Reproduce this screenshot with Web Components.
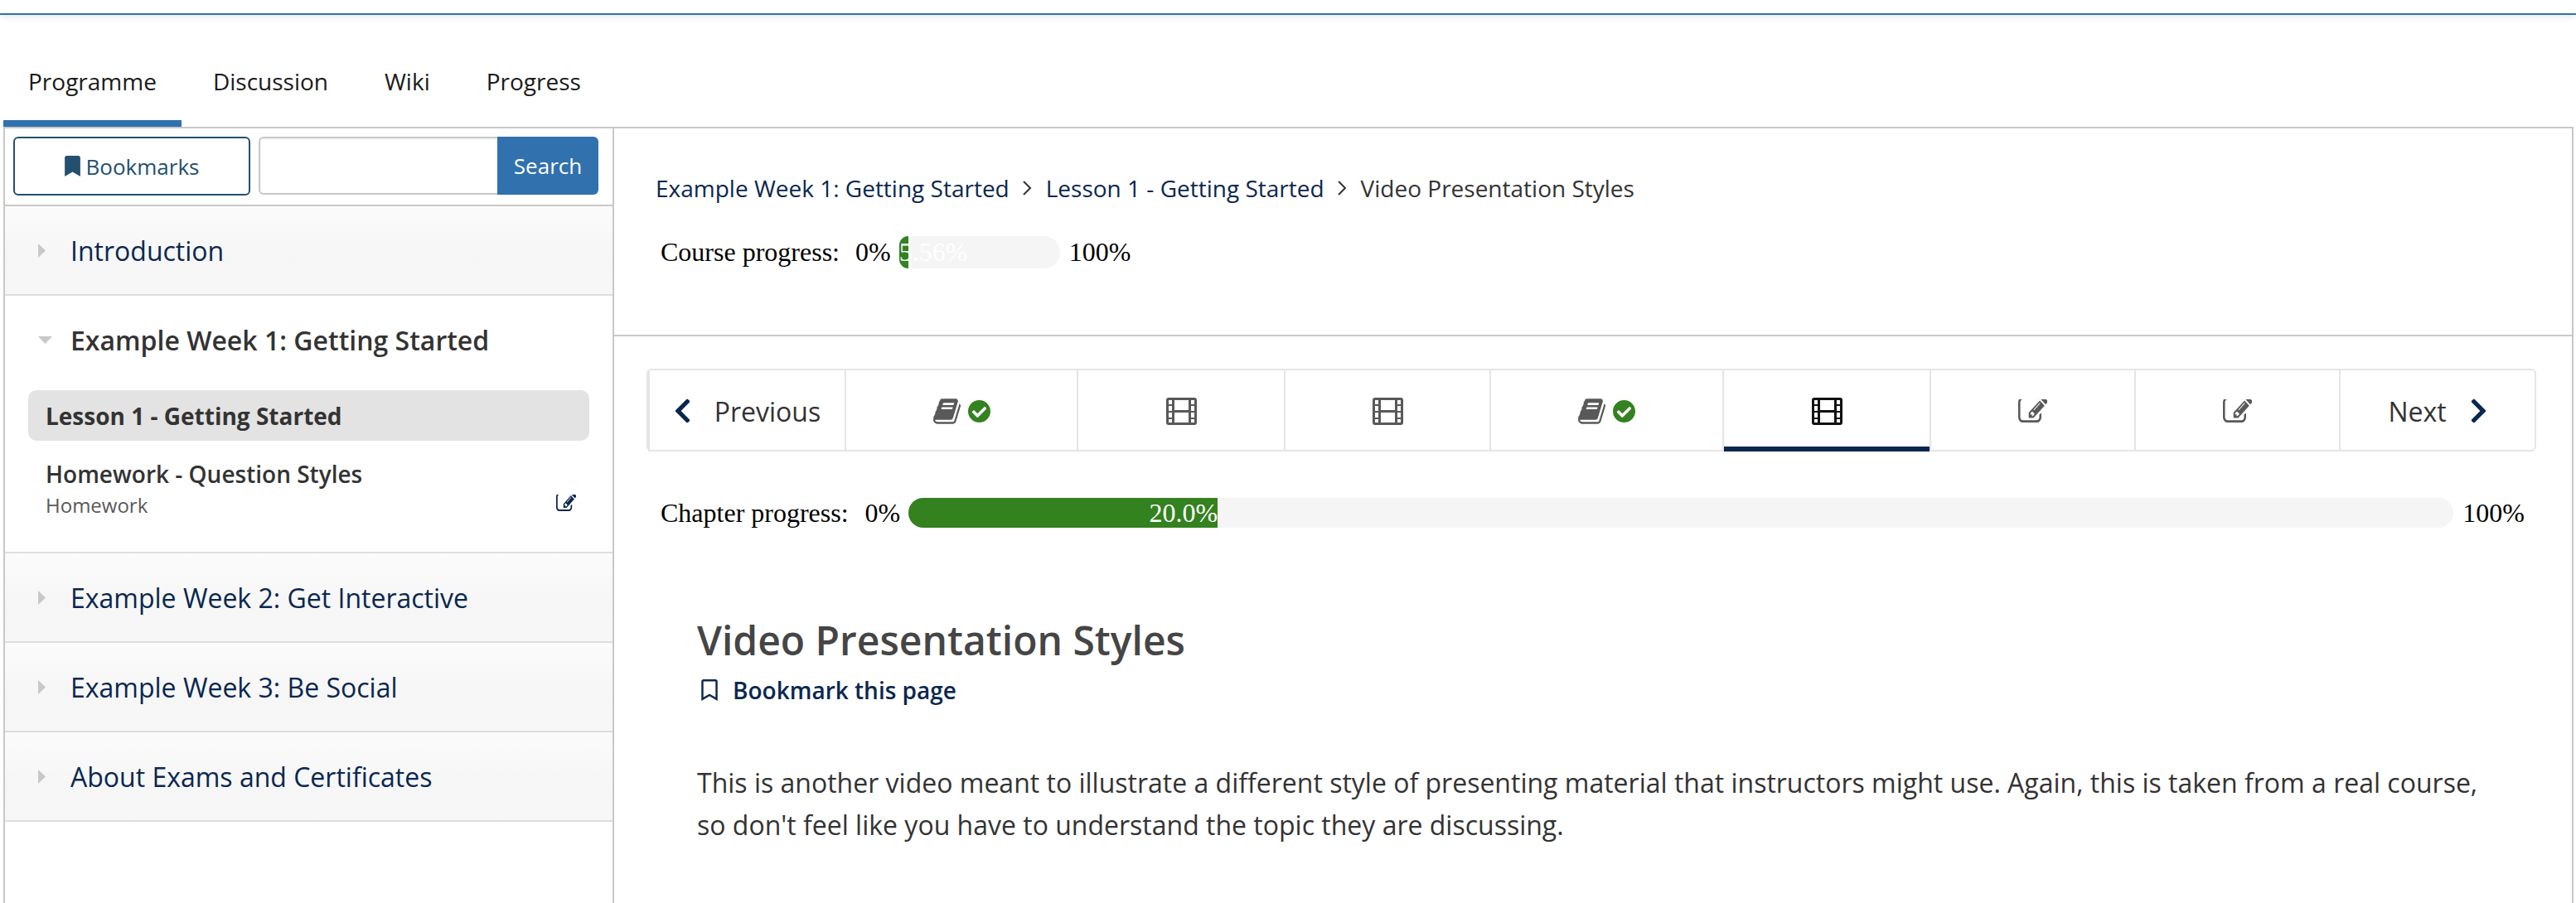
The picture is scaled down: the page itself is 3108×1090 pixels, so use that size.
<!DOCTYPE html>
<html lang="en">
<head>
<meta charset="utf-8">
<title>Video Presentation Styles</title>
<style>
    html, body { margin: 0; height: 100%; overflow: hidden; background: #fff; }
    body { font-family: "Open Sans", "Liberation Sans", sans-serif; color: #333; }
</style>
</head>
<body>
<course-page>
    <top-bar slot="top"></top-bar>
    <tab-row slot="top">
        <tab-item active>Programme</tab-item>
        <tab-item>Discussion</tab-item>
        <tab-item>Wiki</tab-item>
        <tab-item>Progress</tab-item>
    </tab-row>
    <course-sidebar slot="side">
        <side-section label="Introduction"></side-section>
        <side-section label="Example Week 1: Getting Started" open>
            <side-lesson active>Lesson 1 - Getting Started</side-lesson>
            <side-lesson sub="Homework" edit>Homework - Question Styles</side-lesson>
        </side-section>
        <side-section label="Example Week 2: Get Interactive"></side-section>
        <side-section label="Example Week 3: Be Social"></side-section>
        <side-section label="About Exams and Certificates"></side-section>
    </course-sidebar>
    <course-header slot="main">
        <bread-crumbs>
            <span>Example Week 1: Getting Started</span>
            <span>Lesson 1 - Getting Started</span>
            <span>Video Presentation Styles</span>
        </bread-crumbs>
        <progress-line label="Course progress:" value="5.56%" bar-width="194px" fill-width="11px"></progress-line>
    </course-header>
    <sequence-nav slot="main"></sequence-nav>
    <progress-line slot="main" class="chapter" label="Chapter progress:" value="20.0%" fill-width="20%" wide></progress-line>
    <unit-content slot="main">
        <p>This is another video meant to illustrate a different style of presenting material that instructors might use. Again, this is taken from a real course, so don't feel like you have to understand the topic they are discussing.</p>
    </unit-content>
</course-page>

<script>
const ICONS = {
    left: '<svg viewBox="0 0 320 512" width="21" height="34"><path fill="currentColor" d="M34.52 239.03L228.87 44.69c9.37-9.37 24.57-9.37 33.94 0l22.67 22.67c9.36 9.36 9.37 24.52.04 33.9L131.49 256l154.02 154.75c9.34 9.38 9.32 24.54-.04 33.9l-22.67 22.67c-9.37 9.37-24.57 9.37-33.94 0L34.52 272.97c-9.37-9.37-9.37-24.57 0-33.94z"/></svg>',
    right: '<svg viewBox="0 0 320 512" width="21" height="34"><path fill="currentColor" d="M285.48 272.97L91.13 467.31c-9.37 9.37-24.57 9.37-33.94 0l-22.67-22.67c-9.36-9.36-9.37-24.52-.04-33.9L188.51 256 34.48 101.25c-9.34-9.38-9.32-24.54.04-33.9l22.67-22.67c9.37-9.37 24.57-9.37 33.94 0l194.35 194.34c9.37 9.37 9.37 24.57 0 33.94z"/></svg>',
    check: '<svg viewBox="8 8 496 496" width="27" height="27"><path fill="#33811f" d="M504 256c0 136.967-111.033 248-248 248S8 392.967 8 256 119.033 8 256 8s248 111.033 248 248zM227.314 387.314l184-184c6.248-6.248 6.248-16.379 0-22.627l-22.627-22.627c-6.248-6.249-16.379-6.249-22.628 0L216 308.118l-70.059-70.059c-6.248-6.248-16.379-6.248-22.628 0l-22.627 22.627c-6.248 6.248-6.248 16.379 0 22.627l104 104c6.249 6.249 16.379 6.249 22.628.001z"/></svg>',
    book: '<svg viewBox="0 128 1664 1536" width="33" height="31"><path fill="currentColor" d="M1639 478q40 57 18 129l-275 906q-19 64-76.500 107.500t-122.500 43.500h-923q-77 0-148.500-53.500t-99.500-131.500q-24-67-2-127 0-4 3-27t4-37q1-8-3-21.500t-3-19.500q2-11 8-21t16.500-23.500 16.500-23.500q23-38 45-91.500t30-91.500q3-10 .5-30t-.5-28q3-11 17-28t17-23q21-36 42-92t25-90q1-9-2.500-32t.5-28q4-13 22-30.500t22-22.500q19-26 42.500-84.500t27.500-96.500q1-8-3-25.500t-2-26.500q2-8 9-18t18-23 17-21q8-12 16.500-30.500t15-35 16-36 19.500-32 26.500-23.500 36-11.500 47.500 5.500l-1 3q38-9 51-9h761q74 0 114 56t18 130l-274 906q-36 119-71.500 153.500t-128.500 34.500h-869q-27 0-38 15-11 16-1 43 24 70 144 70h923q29 0 56-15.500t35-41.500l300-987q7-22 5-57 38 15 59 43zm-1064 2q-4 13 2 22.500t20 9.500h608q13 0 25.500-9.500t16.500-22.500l21-64q4-13-2-22.500t-20-9.500h-608q-13 0-25.500 9.500t-16.500 22.500zm-83 256q-4 13 2 22.500t20 9.500h608q13 0 25.500-9.500t16.500-22.500l21-64q4-13-2-22.500t-20-9.500h-608q-13 0-25.500 9.500t-16.500 22.500z"/></svg>',
    film: '<svg viewBox="0 0 37 33" width="37" height="33"><path fill="currentColor" fill-rule="evenodd" d="M3 0h31a3 3 0 0 1 3 3v27a3 3 0 0 1-3 3H3a3 3 0 0 1-3-3V3a3 3 0 0 1 3-3zM3 3v5h4V3zM3 10v6h4v-6zM3 18v6h4v-6zM3 26v4h4v-4zM30 3v5h4V3zM30 10v6h4v-6zM30 18v6h4v-6zM30 26v4h4v-4zM10 3v12h17V3zM10 18v12h17V18z"/></svg>',
    edit: '<svg viewBox="0 256 1760 1280" preserveAspectRatio="none" width="35" height="28"><path fill="currentColor" d="M888 1184l116-116-152-152-116 116v56h96v96h56zm440-720q-16-16-33 1l-350 350q-17 17-1 33t33-1l350-350q17-17 1-33zm80 594v190q0 119-84.500 203.500t-203.500 84.500h-832q-119 0-203.500-84.500t-84.500-203.500v-832q0-119 84.500-203.500t203.500-84.500h832q63 0 117 25 15 7 18 23 3 17-9 29l-49 49q-14 14-32 8-23-6-45-6h-832q-66 0-113 47t-47 113v832q0 66 47 113t113 47h832q66 0 113-47t47-113v-126q0-13 9-22l64-64q15-15 35-7t20 29zm-96-738l288 288-672 672h-288v-288zm444 132l-92 92-288-288 92-92q28-28 68-28t68 28l152 152q28 28 28 68t-28 68z"/></svg>',
    mark: '<svg viewBox="0 0 384 512" width="19" height="25"><path fill="currentColor" d="M0 512V48C0 21.490 21.490 0 48 0h288c26.510 0 48 21.490 48 48v464L192 400 0 512z"/></svg>',
    markOpen: '<svg viewBox="0 0 384 512" width="22" height="26"><path fill="currentColor" d="M336 0H48C21.490 0 0 21.490 0 48v464l192-112 192 112V48c0-26.510-21.490-48-48-48zm0 428.430l-144-84-144 84V54a6 6 0 0 1 6-6h276c3.314 0 6 2.683 6 5.996V428.430z"/></svg>'
};

class CoursePage extends HTMLElement {
    constructor() {
        super();
        this.attachShadow({ mode: 'open' });
        this.shadowRoot.innerHTML = `
            <style>
                :host { display: flex; flex-direction: column; height: 100vh; overflow: hidden; }
                .body {
                    flex: 1; min-height: 0; display: grid; grid-template-columns: 737px 1fr;
                    margin: 0 3px 0 4px; border-top: 2px solid #c8c8c8; border-right: 2px solid #c8c8c8;
                }
                .main { min-width: 0; }
            </style>
            <slot name="top"></slot>
            <div class="body">
                <slot name="side"></slot>
                <div class="main"><slot name="main"></slot></div>
            </div>
        `;
    }
}

class TopBar extends HTMLElement {
    constructor() {
        super();
        this.attachShadow({ mode: 'open' });
        this.shadowRoot.innerHTML = `
            <style>
                :host {
                    display: block; height: 16px; border-bottom: 2px solid #3071ae;
                    box-shadow: 0 2px 10px rgba(0, 0, 0, 0.1);
                }
            </style>
        `;
    }
}

class TabRow extends HTMLElement {
    constructor() {
        super();
        this.attachShadow({ mode: 'open' });
        this.shadowRoot.innerHTML = `
            <style>
                :host { display: flex; gap: 8px; height: 135px; padding-left: 4px; align-items: flex-end; }
            </style>
            <slot></slot>
        `;
    }
}

class TabItem extends HTMLElement {
    constructor() {
        super();
        this.attachShadow({ mode: 'open' });
        this.shadowRoot.innerHTML = `
            <style>
                :host {
                    display: block; box-sizing: border-box; height: 100px; padding: 26px 30px 0;
                    font-size: 28px; line-height: 38px; color: #1a1a1a; border-bottom: 8px solid transparent;
                }
                :host([active]) { border-bottom-color: #3071ae; }
            </style>
            <slot></slot>
        `;
    }
}

class CourseSidebar extends HTMLElement {
    constructor() {
        super();
        this.attachShadow({ mode: 'open' });
        this.shadowRoot.innerHTML = `
            <style>
                :host { display: block; border-left: 2px solid #c8c8c8; border-right: 2px solid #c8c8c8; }
                .tools {
                    display: flex; box-sizing: border-box; height: 94px; padding: 10px 16px 0 10px;
                    border-bottom: 2px solid #c8c8c8;
                }
                .bookmarks {
                    box-sizing: border-box; width: 286px; height: 71px; margin-right: 10px;
                    display: flex; align-items: center; justify-content: center; gap: 7px;
                    border: 2px solid #23506f; border-radius: 6px;
                    color: #23506f; font-size: 26px;
                }
                .input {
                    box-sizing: border-box; width: 288px; height: 70px;
                    border: 2px solid #c8c8c8; border-right: 0; border-radius: 6px 0 0 6px;
                    box-shadow: inset 0 1px 2px rgba(0, 0, 0, 0.08);
                }
                .search {
                    width: 122px; height: 70px; display: flex; align-items: center; justify-content: center;
                    background: #3071ae; color: #fff; font-size: 26px; border-radius: 0 6px 6px 0;
                }
            </style>
            <div class="tools">
                <div class="bookmarks">${ICONS.mark}<span>Bookmarks</span></div>
                <div class="input"></div>
                <div class="search">Search</div>
            </div>
            <slot></slot>
        `;
    }
}

class SideSection extends HTMLElement {
    constructor() {
        super();
        this.attachShadow({ mode: 'open' });
        this.shadowRoot.innerHTML = `
            <style>
                :host { display: block; border-bottom: 2px solid #ddd; }
                .head {
                    display: flex; align-items: center; height: 106px; box-sizing: border-box;
                    padding-left: 40px; font-size: 32px; color: #0a2750;
                    background: linear-gradient(#fff, #f5f5f5);
                }
                :host(:not([open])) .head { background: linear-gradient(#fbfbfb 0%, #f6f6f6 60%, #f7f7f7 100%); }
                :host([open]) .head { background: none; color: #333; font-weight: 600; }
                .arrow { width: 39px; flex: none; display: flex; }
                .list { display: none; padding: 8px 28px 0 28px; }
                :host([open]) .list { display: block; }
            </style>
            <div class="head">
                <span class="arrow"></span>
                <span class="label"></span>
            </div>
            <div class="list"><slot></slot></div>
        `;
    }

    connectedCallback() {
        this.shadowRoot.querySelector('.label').textContent = this.getAttribute('label');
        this.shadowRoot.querySelector('.arrow').innerHTML = this.hasAttribute('open')
            ? '<svg width="17" height="9"><path fill="#c8c8c8" d="M0 0h17L8.500 9z"/></svg>'
            : '<svg width="9" height="17"><path fill="#c8c8c8" d="M0 0l9 8.500L0 17z"/></svg>';
    }
}

class SideLesson extends HTMLElement {
    constructor() {
        super();
        this.attachShadow({ mode: 'open' });
        this.shadowRoot.innerHTML = `
            <style>
                :host {
                    display: flex; align-items: center; justify-content: space-between; box-sizing: border-box;
                    padding: 0 16px 0 21px; border-radius: 10px; font-size: 28px; font-weight: 600; color: #333;
                }
                :host([active]) { height: 61px; background: #e3e3e3; font-weight: 700; }
                :host(:not([active])) { height: 134px; padding-bottom: 17px; }
                .sub { font-size: 24px; font-weight: 400; color: #595959; line-height: 38px; }
                .sub:empty { display: none; }
                .icon { color: #0a2750; display: flex; margin-top: 32px; }
                .icon:empty { display: none; }
            </style>
            <div>
                <div><slot></slot></div>
                <div class="sub"></div>
            </div>
            <span class="icon"></span>
        `;
    }

    connectedCallback() {
        this.shadowRoot.querySelector('.sub').textContent = this.getAttribute('sub') || '';
        if (this.hasAttribute('edit')) {
            this.shadowRoot.querySelector('.icon').innerHTML = ICONS.edit.replace('width="35" height="28"', 'width="24" height="20"');
        }
    }
}

class CourseHeader extends HTMLElement {
    constructor() {
        super();
        this.attachShadow({ mode: 'open' });
        this.shadowRoot.innerHTML = `
            <style>
                :host { display: block; box-sizing: border-box; height: 251px; padding-top: 50px; border-bottom: 2px solid #c8c8c8; }
            </style>
            <slot></slot>
        `;
    }
}

class BreadCrumbs extends HTMLElement {
    constructor() {
        super();
        this.attachShadow({ mode: 'open' });
        this.shadowRoot.innerHTML = `
            <style>
                :host {
                    display: flex; align-items: center; gap: 16.5px; height: 44px; margin-bottom: 35px;
                    padding-left: 50px; font-size: 28px; color: #0a2750;
                }
                ::slotted(span) { display: block; }
                ::slotted(span:last-child) { color: #333; }
            </style>
            <slot></slot>
        `;
    }

    connectedCallback() {
        // separators go between the crumbs passed in
        [...this.querySelectorAll('span')].slice(1).forEach(crumb => {
            const sep = document.createElementNS('http://www.w3.org/2000/svg', 'svg');
            sep.setAttribute('viewBox', '0 0 11 18');
            sep.setAttribute('width', '11');
            sep.setAttribute('height', '18');
            sep.innerHTML = '<path fill="none" stroke="#333" stroke-width="2" d="M1 1l8 8-8 8"/>';
            this.insertBefore(sep, crumb);
        });
    }
}

class ProgressLine extends HTMLElement {
    constructor() {
        super();
        this.attachShadow({ mode: 'open' });
        this.shadowRoot.innerHTML = `
            <style>
                :host {
                    display: flex; align-items: center; height: 40px; padding-left: 56px; padding-right: 57px;
                    font-family: "Liberation Serif", "Times New Roman", serif; font-size: 32px; color: #000;
                    white-space: nowrap;
                }
                .label { margin-right: 19px; }
                .track {
                    margin: 0 11px 0 10px; height: 39px; background: #f5f5f5; border-radius: 20px; min-width: 0;
                }
                :host([wide]) .track { flex: 1; height: 36px; border-radius: 18px; }
                :host([wide]) .label { margin-right: 20px; }
                .fill {
                    height: 100%; background: #33811f; color: #fff; line-height: 39px; border-radius: 20px 0 0 20px;
                }
                :host([wide]) .fill { line-height: 36px; text-align: right; border-radius: 18px 0 0 18px; }
            </style>
            <span class="label"></span><span>0%</span>
            <div class="track"><div class="fill"></div></div>
            <span>100%</span>
        `;
    }

    connectedCallback() {
        const root = this.shadowRoot;
        root.querySelector('.label').textContent = this.getAttribute('label');
        root.querySelector('.fill').textContent = this.getAttribute('value');
        root.querySelector('.fill').style.width = this.getAttribute('fill-width');
        if (this.getAttribute('bar-width')) {
            root.querySelector('.track').style.width = this.getAttribute('bar-width');
        }
        if (this.hasAttribute('wide')) {
            this.style.marginTop = '54px';
        }
    }
}

class SequenceNav extends HTMLElement {
    constructor() {
        super();
        this.attachShadow({ mode: 'open' });
        this.shadowRoot.innerHTML = `
            <style>
                :host {
                    display: grid; box-sizing: border-box; height: 100px; margin: 39px 43px 0 39px;
                    grid-template-columns: 237px 280px 250px 248px 281px 250px 247px 247px 1fr;
                    border: 2px solid #e5e5e5; border-radius: 6px;
                }
                .cell {
                    display: flex; align-items: center; justify-content: center; gap: 9px; box-sizing: border-box;
                    color: #595959; border-left: 2px solid #e5e5e5; font-size: 32px;
                }
                .cell:first-child { border-left: 0; }
                .cell.text { color: #333; gap: 28px; }
                .cell.text svg { color: #0a2750; }
                .cell.active { color: #111; box-shadow: inset 0 -6px 0 #0a2750; height: 98px; }
            </style>
            <div class="cell text">${ICONS.left}<span>Previous</span></div>
            <div class="cell">${ICONS.book}${ICONS.check}</div>
            <div class="cell">${ICONS.film}</div>
            <div class="cell">${ICONS.film}</div>
            <div class="cell">${ICONS.book}${ICONS.check}</div>
            <div class="cell active">${ICONS.film}</div>
            <div class="cell">${ICONS.edit}</div>
            <div class="cell">${ICONS.edit}</div>
            <div class="cell text"><span>Next</span>${ICONS.right}</div>
        `;
    }
}

class UnitContent extends HTMLElement {
    constructor() {
        super();
        this.attachShadow({ mode: 'open' });
        this.shadowRoot.innerHTML = `
            <style>
                :host { display: block; padding: 0 90px 0 100px; color: #333; }
                h2 { margin: 0; padding-top: 102px; font-size: 48px; line-height: 64px; font-weight: 600; color: #454545; }
                .mark {
                    display: flex; align-items: center; gap: 17px; height: 40px; margin-top: 8px; padding-left: 4px;
                    font-size: 28px; font-weight: 600; color: #0a2750;
                }
                .text { margin-top: 66px; font-size: 32px; line-height: 51px; }
                ::slotted(p) { margin: 0; }
            </style>
            <h2>Video Presentation Styles</h2>
            <div class="mark">${ICONS.markOpen}<span>Bookmark this page</span></div>
            <div class="text"><slot></slot></div>
        `;
    }
}

customElements.define('course-page', CoursePage);
customElements.define('top-bar', TopBar);
customElements.define('tab-row', TabRow);
customElements.define('tab-item', TabItem);
customElements.define('course-sidebar', CourseSidebar);
customElements.define('side-section', SideSection);
customElements.define('side-lesson', SideLesson);
customElements.define('course-header', CourseHeader);
customElements.define('bread-crumbs', BreadCrumbs);
customElements.define('progress-line', ProgressLine);
customElements.define('sequence-nav', SequenceNav);
customElements.define('unit-content', UnitContent);
</script>
</body>
</html>
